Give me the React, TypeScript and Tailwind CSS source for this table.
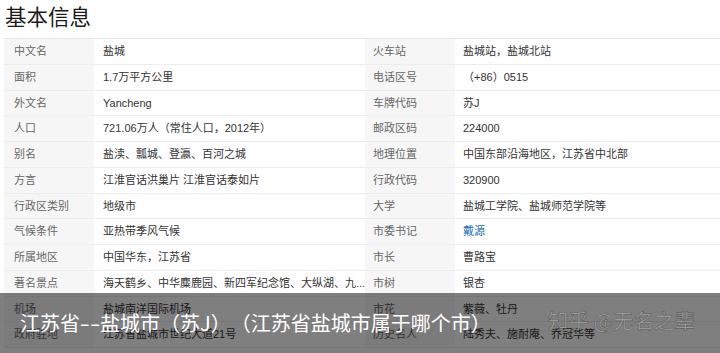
import React from "react";

const rows: [string, React.ReactNode, string, React.ReactNode][] = [
  ["中文名", "盐城", "火车站", "盐城站，盐城北站"],
  ["面积", "1.7万平方公里", "电话区号", "（+86）0515"],
  ["外文名", "Yancheng", "车牌代码", "苏J"],
  ["人口", "721.06万人（常住人口，2012年）", "邮政区码", "224000"],
  ["别名", "盐渎、瓢城、登瀛、百河之城", "地理位置", "中国东部沿海地区，江苏省中北部"],
  ["方言", "江淮官话洪巢片 江淮官话泰如片", "行政代码", "320900"],
  ["行政区类别", "地级市", "大学", "盐城工学院、盐城师范学院等"],
  ["气候条件", "亚热带季风气候", "市委书记", <span className="text-[#136ec2]">戴源</span>],
  ["所属地区", "中国华东，江苏省", "市长", "曹路宝"],
  ["著名景点", "海天鹤乡、中华麋鹿园、新四军纪念馆、大纵湖、九...", "市树", "银杏"],
  ["机场", "盐城南洋国际机场", "市花", "紫薇、牡丹"],
  ["政府驻地", "江苏省盐城市世纪大道21号", "历史名人", "陆秀夫、施耐庵、乔冠华等"],
];

export default function App() {
  return (
    <div className="relative w-[720px] h-[353px] overflow-hidden bg-white font-['Liberation_Sans','Noto_Sans_CJK_SC',sans-serif]">
      <div className="h-[38px] pl-[5px] pt-[1px] text-[21.5px] leading-[30px] text-[#1a1a1a] font-['Noto_Sans_CJK_SC',sans-serif]">
        基本信息
      </div>
      <div className="ml-[4px] border-t border-[#e6e6e6] text-[11px]">
        {rows.map((r, i) => (
          <div key={i} className="flex h-[25.75px] border-b border-[#ececec]">
            <div className="w-[90px] shrink-0 bg-[#f6f6f6] pl-[10px] flex items-center text-[#666]">{r[0]}</div>
            <div className="w-[271px] shrink-0 pl-[9px] flex items-center text-[#333] whitespace-nowrap overflow-hidden">{r[1]}</div>
            <div className="w-[90px] shrink-0 bg-[#f6f6f6] pl-[8px] flex items-center text-[#666]">{r[2]}</div>
            <div className="flex-1 pl-[8px] flex items-center text-[#333] whitespace-nowrap">{r[3]}</div>
          </div>
        ))}
      </div>
      <div className="absolute left-0 right-0 top-[293px] bottom-0 bg-black/50 flex items-center font-['Noto_Sans_CJK_SC',sans-serif]">
        <div className="pl-[20px] text-[20px] text-white leading-none [text-spacing-trim:space-all]">
          江苏省<span className="inline-block w-[20px] text-center scale-x-150">--</span>盐城市（苏J）（江苏省盐城市属于哪个市）
        </div>
        <div className="absolute left-[548px] top-[17px] text-[20.5px] leading-none text-white/30 [-webkit-text-stroke:0.7px_rgba(0,0,0,0.35)]">
          知乎 @无名之辈
        </div>
      </div>
    </div>
  );
}
